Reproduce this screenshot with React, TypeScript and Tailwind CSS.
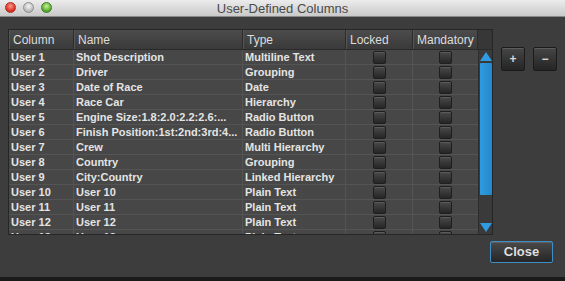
const rows: [string, string, string][] = [
  ['User 1', 'Shot Description', 'Multiline Text'],
  ['User 2', 'Driver', 'Grouping'],
  ['User 3', 'Date of Race', 'Date'],
  ['User 4', 'Race Car', 'Hierarchy'],
  ['User 5', 'Engine Size:1.8:2.0:2.2:2.6:...', 'Radio Button'],
  ['User 6', 'Finish Position:1st:2nd:3rd:4...', 'Radio Button'],
  ['User 7', 'Crew', 'Multi Hierarchy'],
  ['User 8', 'Country', 'Grouping'],
  ['User 9', 'City:Country', 'Linked Hierarchy'],
  ['User 10', 'User 10', 'Plain Text'],
  ['User 11', 'User 11', 'Plain Text'],
  ['User 12', 'User 12', 'Plain Text'],
  ['User 13', 'User 13', 'Plain Text'],
];

function Check() {
  return (
    <div className="w-[13px] h-[13px] rounded-[2px] bg-gradient-to-b from-[#4a4a4a] to-[#262626] border border-[#1e1e1e] shadow-[inset_0_1px_0_#5a5a5a]" />
  );
}

function HeaderCell({ label, w }: { label: string; w: string }) {
  return (
    <div className={`${w} h-full flex items-center pl-[4px] border-r border-[#2c2c2c] shadow-[inset_1px_0_0_#555]`}>
      {label}
    </div>
  );
}

function SquareButton({ children }: { children: React.ReactNode }) {
  return (
    <button className="w-[24px] h-[24px] flex items-center justify-center rounded-[2px] border border-[#1b1b1b] bg-gradient-to-b from-[#464646] to-[#252525] shadow-[inset_0_1px_0_#5c5c5c] text-[#d8d8d8] text-[12px] font-bold">
      {children}
    </button>
  );
}

export default function App() {
  return (
    <div className="w-[565px] h-[281px] flex flex-col bg-[#3d3d3d] overflow-hidden" style={{ fontFamily: '"Liberation Sans", Arial, sans-serif' }}>
      {/* Title bar */}
      <div className="relative h-[17px] flex items-center justify-center bg-gradient-to-b from-[#ececec] to-[#c9c9c9] border-b border-[#8a8a8a]">
        <div className="absolute left-[5px] top-[2px] flex gap-[7px]">
          <div className="w-[11px] h-[11px] rounded-full bg-[radial-gradient(circle_at_50%_35%,#ff9a8c,#d9261a_70%)] border border-[#a8332a]" />
          <div className="w-[11px] h-[11px] rounded-full bg-[radial-gradient(circle_at_50%_35%,#f4f4f4,#b8b8b8_70%)] border border-[#8e8e8e]" />
          <div className="w-[11px] h-[11px] rounded-full bg-[radial-gradient(circle_at_50%_35%,#c8f39a,#4ea626_70%)] border border-[#3c7f22]" />
        </div>
        <span className="text-[13px] text-[#4a4a4a] leading-none">User-Defined Columns</span>
      </div>

      {/* Body */}
      <div className="flex-1 flex flex-col pl-[8px] pt-[12px]">
        <div className="flex">
          {/* Table */}
          <div className="w-[485px] h-[206px] border border-[#262626] bg-[#474747] flex flex-col overflow-hidden text-[11px] font-bold text-[#e4e4e4]">
            <div className="h-[20px] shrink-0 flex bg-gradient-to-b from-[#4c4c4c] to-[#3a3a3a] border-b border-[#2a2a2a] text-[#dcdcdc] font-normal text-[12px]">
              <HeaderCell label="Column" w="w-[65px]" />
              <HeaderCell label="Name" w="w-[169px]" />
              <HeaderCell label="Type" w="w-[103px]" />
              <HeaderCell label="Locked" w="w-[67px]" />
              <HeaderCell label="Mandatory" w="w-[65px]" />
              <div className="flex-1 bg-[#373737]" />
            </div>
            <div className="flex flex-1 min-h-0">
              <div className="w-[469px] flex flex-col">
                {rows.map(([col, name, type]) => (
                  <div key={col} className="h-[15px] shrink-0 flex items-center border-b border-[#545454] leading-none">
                    <div className="w-[65px] h-full flex items-center pl-[2px] border-r border-[#545454]">{col}</div>
                    <div className="w-[169px] h-full flex items-center pl-[2px] border-r border-[#545454] whitespace-nowrap overflow-hidden">{name}</div>
                    <div className="w-[103px] h-full flex items-center pl-[2px] border-r border-[#545454] whitespace-nowrap">{type}</div>
                    <div className="w-[67px] h-full flex items-center justify-center border-r border-[#545454]"><Check /></div>
                    <div className="w-[65px] h-full flex items-center justify-center"><Check /></div>
                  </div>
                ))}
              </div>
              {/* Scrollbar */}
              <div className="flex-1 flex flex-col items-center bg-[#3a3a3a] border-l border-[#2c2c2c] pt-[2px]">
                <svg width="12" height="9" viewBox="0 0 12 9"><polygon points="6,0 12,9 0,9" fill="#2f9be0" /></svg>
                <div className="w-[12px] h-[132px] mt-[2px] bg-gradient-to-r from-[#2f9be0] to-[#2389cc] rounded-[1px]" />
                <div className="flex-1" />
                <svg width="12" height="9" viewBox="0 0 12 9" className="mb-[2px]"><polygon points="0,0 12,0 6,9" fill="#2f9be0" /></svg>
              </div>
            </div>
          </div>

          {/* +/- buttons */}
          <div className="flex gap-[8px] ml-[8px] mt-[18px]">
            <SquareButton>+</SquareButton>
            <SquareButton>−</SquareButton>
          </div>
        </div>

        <div className="flex justify-end pr-[12px] mt-[6px]">
          <button className="w-[63px] h-[22px] rounded-[2px] border border-[#3f8fc6] bg-gradient-to-b from-[#4a4a4a] to-[#262626] shadow-[inset_0_1px_0_#5e5e5e] text-[13px] font-bold text-[#dedede]">
            Close
          </button>
        </div>
      </div>
      <div className="h-[4px] bg-[#1a1a1a]" />
    </div>
  );
}
